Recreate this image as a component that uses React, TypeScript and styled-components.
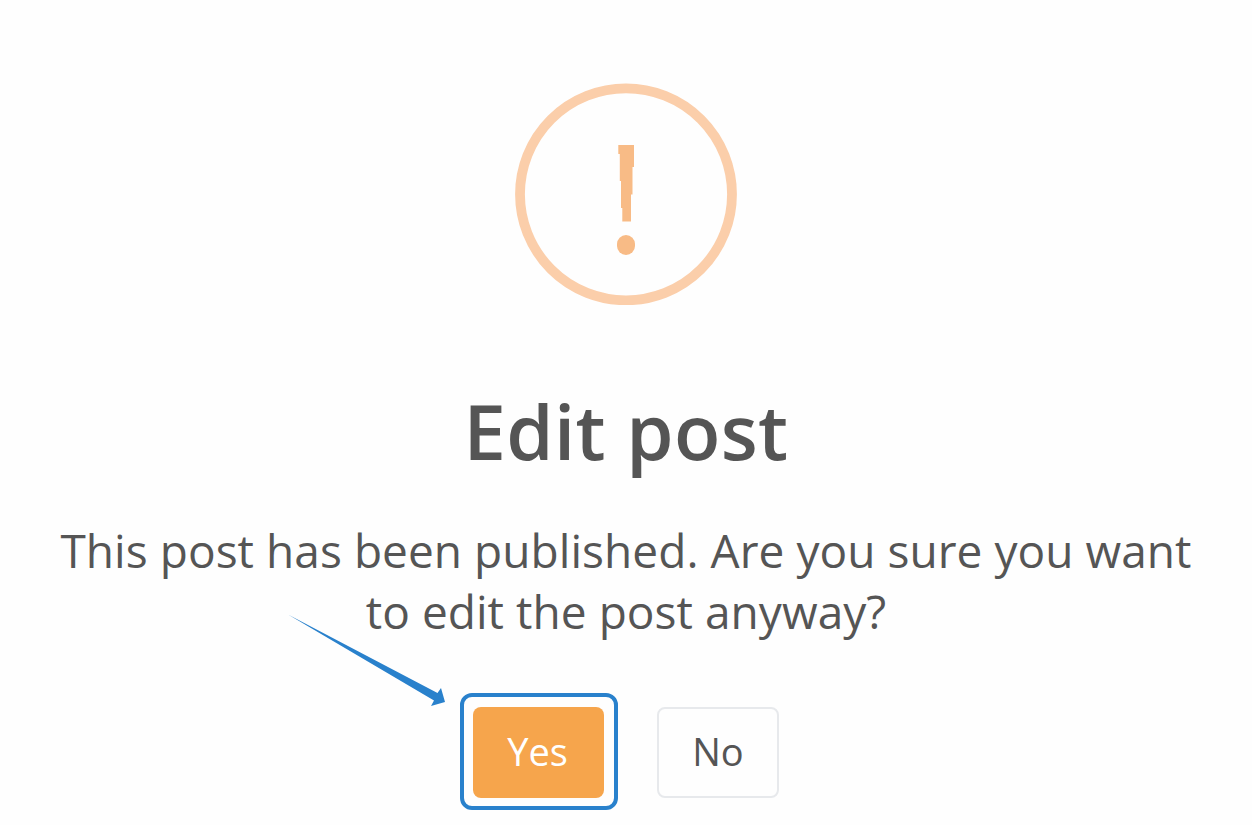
import React from "react";
import styled, { createGlobalStyle } from "styled-components";

const colors = {
    background: "#fefefe",
    text: "#555555",
    ring: "#fbceaa",
    mark: "#f8bb86",
    primary: "#f6a54c",
    highlight: "#2981cc",
    border: "#e7e9ec",
};

const GlobalStyle = createGlobalStyle`
    body {
        margin: 0;
        background: ${colors.background};
    }
`;

const Dialog = styled.main`
    box-sizing: border-box;
    width: 1252px;
    height: 825px;
    padding-top: 83px;
    display: flex;
    flex-direction: column;
    align-items: center;
    overflow: hidden;
    font-family: "Open Sans", sans-serif;
    color: ${colors.text};
`;

const WarningIcon = styled.svg`
    display: block;
    width: 222px;
    height: 222px;
    flex: none;
`;

const Title = styled.h1`
    margin: 74px 0 0;
    font-size: 76px;
    line-height: 104px;
    font-weight: 600;
    letter-spacing: 0.4px;
    white-space: nowrap;
`;

const Message = styled.p`
    margin: 37px 0 0;
    font-size: 46px;
    line-height: 61px;
    letter-spacing: 0.05px;
    text-align: center;
    white-space: nowrap;
`;

const Actions = styled.div`
    position: relative;
    display: flex;
    align-items: flex-start;
    align-self: flex-start;
    gap: 39px;
    margin: 51px 0 0 460px;
`;

const Highlight = styled.div`
    box-sizing: border-box;
    width: 158px;
    height: 117px;
    padding: 10px 9px;
    border: 4px solid ${colors.highlight};
    border-radius: 12px;
`;

const Button = styled.button<{ $primary?: boolean }>`
    box-sizing: border-box;
    width: ${({ $primary }) => ($primary ? "131px" : "122px")};
    height: 91px;
    margin: ${({ $primary }) => ($primary ? "0" : "14px 0 0")};
    padding: ${({ $primary }) => ($primary ? "0 2px 3px 0" : "0 0 3px")};
    border: ${({ $primary }) => ($primary ? "none" : `2px solid ${colors.border}`)};
    border-radius: 8px;
    background: ${({ $primary }) => ($primary ? colors.primary : colors.background)};
    color: ${({ $primary }) => ($primary ? "#fff" : colors.text)};
    font-family: inherit;
    font-size: 38px;
    line-height: 52px;
    cursor: pointer;
`;

const Arrow = styled.svg`
    position: absolute;
    left: -175px;
    top: -82px;
    width: 165px;
    height: 100px;
`;

const App: React.FC = () => {
    return (
        <>
            <GlobalStyle />
            <Dialog>
                <WarningIcon viewBox="0 0 222 222">
                    <circle cx="111" cy="111.3" r="106" fill="none" stroke={colors.ring} strokeWidth="9.8" />
                    <path
                        d="M103.3 62h15.7v22h-1.5v27.5h-1.5v27h-8.7v-13.5h-1.3v-27h-1.2v-27h-1.5z"
                        fill={colors.mark}
                    />
                    <rect x="102" y="152" width="18" height="20" rx="9" fill={colors.mark} />
                </WarningIcon>
                <Title>Edit post</Title>
                <Message>
                    This post has been published. Are you sure you want
                    <br />
                    to edit the post anyway?
                </Message>
                <Actions>
                    <Arrow viewBox="285 611 165 100">
                        <path d="M288 614.5L437.5 693L441 688L445 702L431 706L434 700.5Z" fill={colors.highlight} />
                    </Arrow>
                    <Highlight>
                        <Button $primary>Yes</Button>
                    </Highlight>
                    <Button>No</Button>
                </Actions>
            </Dialog>
        </>
    );
};

export default App;
